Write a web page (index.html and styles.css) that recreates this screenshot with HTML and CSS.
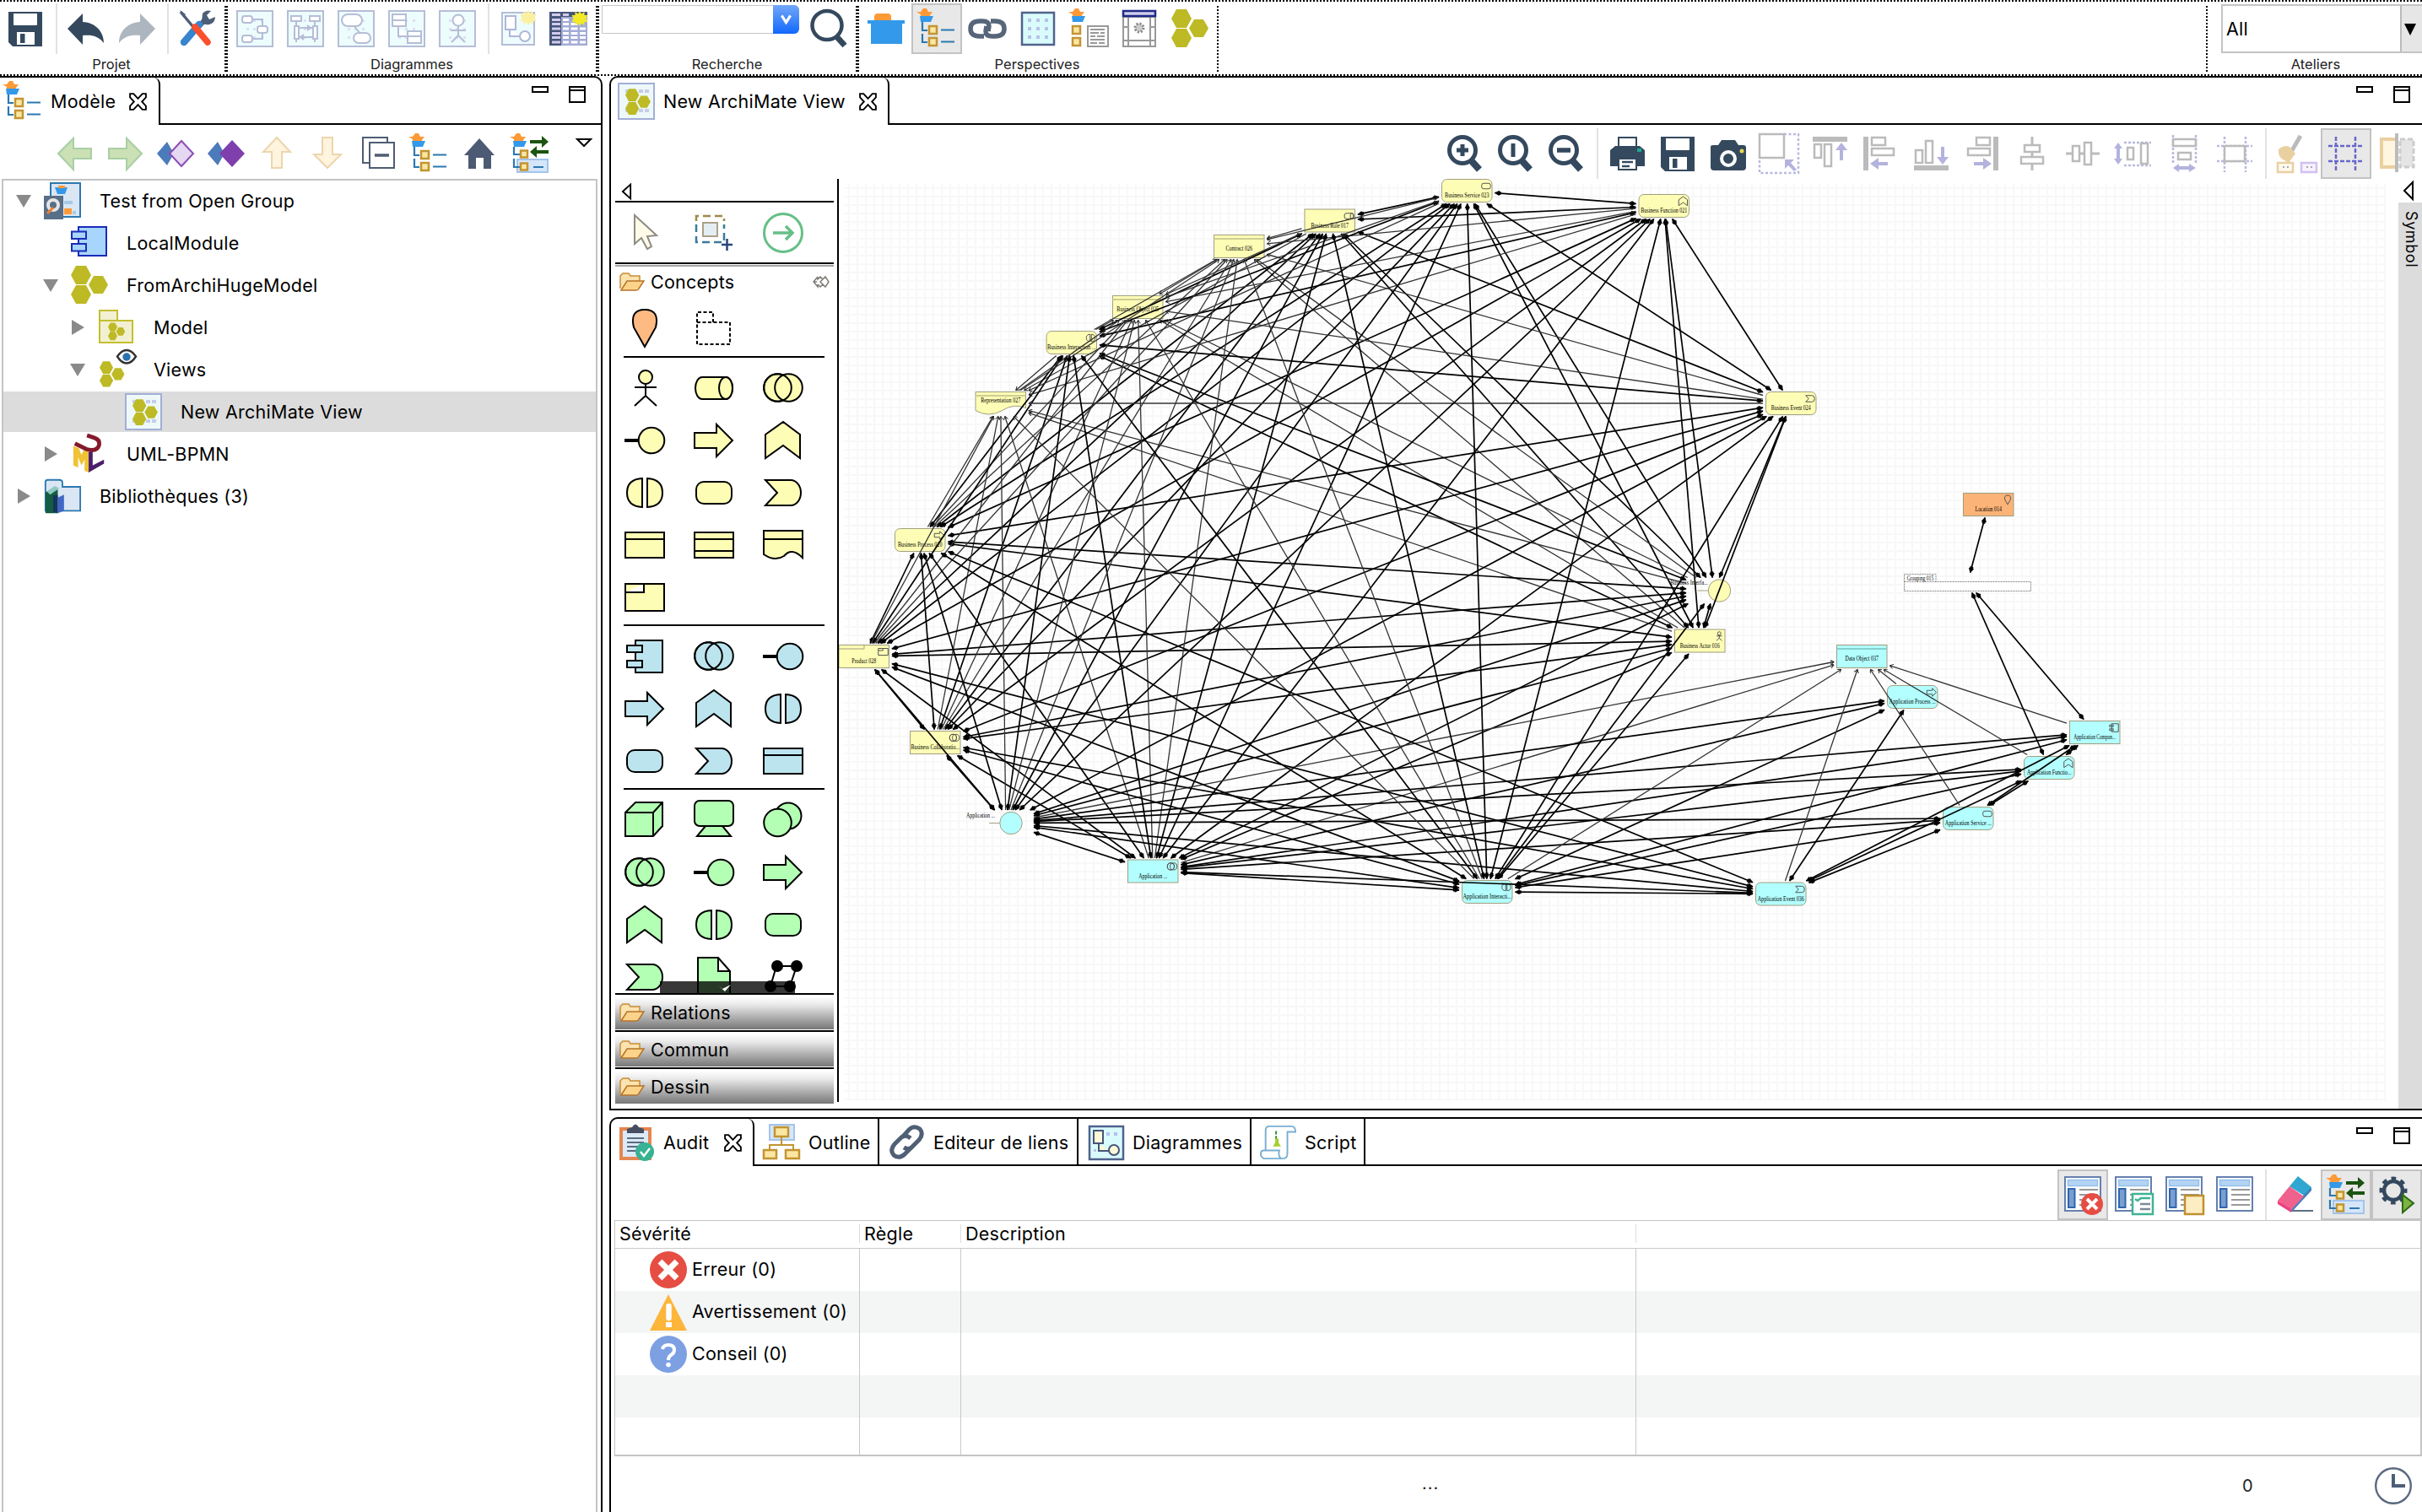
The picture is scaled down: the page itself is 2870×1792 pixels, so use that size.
FILE: index.html
```html
<!DOCTYPE html>
<html lang="fr">
<head>
<meta charset="utf-8">
<title>Modelio - Test from Open Group</title>
<link rel="stylesheet" href="styles.css">
</head>
<body>
<svg class="defs" width="0" height="0" aria-hidden="true">
<defs>
<!-- shared parts -->
<g id="cup"><path d="M-2 2H3L6-2H10L12 2H17L14 6V9H3V5Z" fill="#fd9a37"/><path d="M2 7H18L15 14H3Z" fill="#3399ea"/></g>
<g id="sq"><path d="M13 19h9v9h-9zM13 33h9v9h-9z" fill="#fbe6a2" stroke="#c29532" stroke-width="2.5"/></g>
<g id="hex"><path d="M0 10L6-1H18L24 10L18 21H6ZM0 33L6 22H18L24 33L18 44H6ZM21 21.500L27 11H38L44 21.500L38 32H27Z" fill="#bdba25"/></g>
<g id="sheet"><path d="M1 3h42v40H1z" fill="#fff" stroke="#6580b0" stroke-width="2"/><path d="M4.500 6.500h35v7h-35z" fill="#b5d4f4" stroke="#93c0ec" stroke-width="1.500"/><path d="M5 17h7.500v22H5z" fill="#7a9ed0" stroke="#2f66ad" stroke-width="2"/><path d="M18 18h22M18 24h22M18 30h22M18 36h22" stroke="#999" stroke-width="2"/></g>
<g id="frame"><path d="M1 1h42v42H1z" fill="#edfcfd" stroke="#b6bdd6" stroke-width="2"/><path d="M12 11h3v3h-3zM20 11h3v3h-3zM29 11h3v3h-3zM12 21h3v3h-3zM20 21h3v3h-3zM29 21h3v3h-3zM12 31h3v3h-3zM20 31h3v3h-3zM29 31h3v3h-3z" fill="#dcdff5"/></g>
<g id="sun"><path d="M0-9L2-5.500L5.500-8L5.500-4L9.500-4L7.500 0L9.500 4L5.500 4L5.500 8L2 5.500L0 9L-2 5.500L-5.500 8L-5.500 4L-9.500 4L-7.500 0L-9.500-4L-5.500-4L-5.500-8L-2-5.500Z"/></g>
<g id="lens"><circle cx="19" cy="18" r="15.500" fill="none" stroke="#34495e" stroke-width="5"/><path d="M29 30L39 41" stroke="#34495e" stroke-width="8"/></g>
</defs>
<symbol id="i-save" viewBox="0 0 44 44"><path d="M2 2H42V43H7L2 38Z" fill="#34495e"/><path d="M8 4H36V17Q36 18 35 18H9Q8 18 8 17ZM12 26H33V41H12Z" fill="#fff"/><path d="M16 28h5.500v11H16z" fill="#34495e"/></symbol>
<symbol id="i-undo" viewBox="0 0 44 44"><path d="M0 22L18 4V14C34 15 43 26 43 39C36 30 28 29 18 30V41Z" fill="#34495e"/></symbol>
<symbol id="i-redo" viewBox="0 0 44 44"><path d="M44 22L26 4V14C10 15 1 26 1 39C8 30 16 29 26 30V41Z" fill="#adb6bf"/></symbol>
<symbol id="i-tools" viewBox="0 0 44 44"><path d="M24 19L33 9" stroke="#4d5f78" stroke-width="6"/><path d="M28 4Q32 -1 38 1L33 6L36 11L43 8Q43 15 36 17Q30 18 27 14Z" fill="#4d5f78"/><path d="M2 2L17 20" stroke="#4d5f78" stroke-width="3.500"/><path d="M1 0L8 5L5 8Z" fill="#4d5f78"/><path d="M6 38L24 17" stroke="#3884cd" stroke-width="8.500" stroke-linecap="round"/><path d="M19 20L34 38" stroke="#fc4f2c" stroke-width="7.500" stroke-linecap="round"/></symbol>
<symbol id="i-d1" viewBox="0 0 44 44"><use href="#frame"/><g fill="#fff" stroke="#b6bdd6" stroke-width="2"><path d="M19 11H31V18M19 34H31V28" fill="none"/><rect x="7" y="7" width="12" height="8" rx="3"/><rect x="7" y="30" width="12" height="8" rx="3"/><rect x="25" y="19" width="12" height="8" rx="3"/></g></symbol>
<symbol id="i-d2" viewBox="0 0 44 44"><use href="#frame"/><g fill="#fff" stroke="#b6bdd6" stroke-width="2"><path d="M5 7h12v6H5zM27 7h12v6H27zM9 19h5v15H9zM31 19h5v15h-5zM11 13v6M33 13v6M14 21h17M14 32h17M11 34v4M33 34v4" /><path d="M24 18l4 3-4 3M20 29l-4 3 4 3" fill="#b6bdd6"/></g></symbol>
<symbol id="i-d3" viewBox="0 0 44 44"><use href="#frame"/><g fill="#fff" stroke="#b6bdd6" stroke-width="2"><path d="M19 18L27 28"/><rect x="5" y="5" width="24" height="14" rx="7"/><rect x="19" y="27" width="20" height="12" rx="6"/></g></symbol>
<symbol id="i-d4" viewBox="0 0 44 44"><use href="#frame"/><g fill="#fff" stroke="#b6bdd6" stroke-width="2"><path d="M5 5h16v14H5zM5 12h16M23 25h16v14H23zM23 31h16M12 19v12h11"/></g></symbol>
<symbol id="i-d5" viewBox="0 0 44 44"><use href="#frame"/><g fill="#fff" stroke="#b6bdd6" stroke-width="2"><circle cx="23" cy="12" r="6.500"/><path d="M23 19V30L15 38M23 30L31 38M14 24H32" fill="none"/></g></symbol>
<symbol id="i-dnew" viewBox="0 0 44 44"><path d="M3 3h38v38H3z" fill="#edfcfd" stroke="#b6bdd6" stroke-width="2"/><g fill="#fff" stroke="#b0b6d6" stroke-width="2"><path d="M7 7h12v16H7zM12 23v8h12"/><circle cx="30" cy="31" r="6"/></g><use href="#sun" x="34" y="9" fill="#fbf0a0"/></symbol>
<symbol id="i-table" viewBox="0 0 44 44"><path d="M-1 2H44V42H-1Z" fill="#a3abd6"/><path d="M-1 2h14V42H-1zM-1 2H44V8H-1z" fill="#47557a"/><path d="M2 4h10v3H2zM2 10h10v3H2zM2 15h10v3H2zM2 20.500h10v3H2zM2 26h10v3H2zM2 31h10v3H2zM2 36.500h10v3H2zM15 4h7v3h-7z" fill="#cfcdea"/><path d="M15 10h7v3h-7zM15 15h7v3h-7zM15 20.500h7v3h-7zM15 26h7v3h-7zM15 31h7v3h-7zM15 36.500h7v3h-7zM24.500 15h8v3h-8zM24.500 20.500h8v3h-8zM24.500 26h8v3h-8zM24.500 31h8v3h-8zM24.500 36.500h8v3h-8zM35 20.500h7v3h-7zM35 26h7v3h-7zM35 31h7v3h-7zM35 36.500h7v3h-7z" fill="#fff"/><use href="#sun" x="35" y="10" fill="#f4e928"/></symbol>
<symbol id="i-search" viewBox="0 0 44 44"><ellipse cx="20" cy="18" rx="17.500" ry="17" fill="none" stroke="#34495e" stroke-width="4.500"/><path d="M31 31L41 42" stroke="#34495e" stroke-width="7"/></symbol>
<symbol id="i-basket" viewBox="0 0 44 44"><path d="M8 13V8Q8 4 12 4H24Q28 4 28 8V13Z" fill="#fd9a37"/><path d="M0 12H44V16H41V40H4V16H0Z" fill="#3399ea"/></symbol>
<symbol id="i-tree" viewBox="0 0 44 44"><use href="#cup"/><path d="M5 14V24H11M5 28V38H11M27 23.500H43M27 37.500H43" fill="none" stroke="#2b78b0" stroke-width="2.200"/><use href="#sq"/></symbol>
<symbol id="i-link" viewBox="0 0 44 44"><path d="M18 31H13Q2 31 2 22Q2 13 13 13H16Q24 13 24 19L23 25M26 13H31Q42 13 42 22Q42 31 31 31H28Q20 31 20 25L21 19" fill="none" stroke="#56657a" stroke-width="5.500"/></symbol>
<symbol id="i-grid" viewBox="0 0 44 44"><path d="M3 3h38v38H3z" fill="#d9fbfc" stroke="#52628c" stroke-width="2.500"/><path d="M10 10h4v4h-4zM20 10h4v4h-4zM30 10h4v4h-4zM10 20h4v4h-4zM20 20h4v4h-4zM30 20h4v4h-4zM10 30h4v4h-4zM20 30h4v4h-4zM30 30h4v4h-4z" fill="#b9c0ea"/></symbol>
<symbol id="i-doc" viewBox="0 0 44 44"><use href="#cup"/><path d="M3 19h9v9H3zM3 33h9v9H3z" fill="#fbe6a2" stroke="#c29532" stroke-width="2.500"/><path d="M21 19h24v24H21z" fill="#fff" stroke="#999" stroke-width="2"/><path d="M24 23h17M24 27h10M36 27h5M24 31h6M32 31h9M24 35h17M24 39h8M34 39h7" stroke="#999" stroke-width="2"/></symbol>
<symbol id="i-scroll" viewBox="0 0 44 44"><path d="M3 8h38v35H3zM9 8V43M35 8V43M3 36H41M3 20H9M35 20H41" fill="#fff" stroke="#999" stroke-width="2"/><path d="M3 1h38v6H3z" fill="#d0cdec" stroke="#1f2a87" stroke-width="2.500"/><circle cx="22" cy="21" r="5" fill="#ccc" stroke="#888" stroke-width="3" stroke-dasharray="2 1.900"/></symbol>
<symbol id="i-hex" viewBox="0 0 44 44"><use href="#hex"/></symbol>
<symbol id="i-view" viewBox="0 0 44 44"><path d="M1 1h42v42H1z" fill="#eef8f8" stroke="#a3aed6" stroke-width="2"/><path d="M9 8h5v4H9zM25 8h5v4h-5zM32 8h5v4h-5zM9 31h5v4H9zM25 31h5v4h-5zM32 31h5v4h-5z" fill="#c5cdea"/><use href="#hex" transform="translate(9 8) scale(.68)"/></symbol>
<symbol id="i-back" viewBox="0 0 44 44"><path d="M3 22L21 4V16H42V28H21V41Z" fill="#cbe0b4" stroke="#a8cfa5" stroke-width="2"/></symbol>
<symbol id="i-fwd" viewBox="0 0 44 44"><path d="M42 22L24 4V16H3V28H24V41Z" fill="#cbe0b4" stroke="#a8cfa5" stroke-width="2"/></symbol>
<symbol id="i-dia1" viewBox="0 0 44 44"><path d="M0 22L12 8L20 22L12 36Z" fill="#4c7bbb"/><path d="M15 22L29 7L43 22L29 37Z" fill="#e5d8f2" stroke="#8d4eb4" stroke-width="2"/></symbol>
<symbol id="i-dia2" viewBox="0 0 44 44"><path d="M0 22L12 8L20 22L12 36Z" fill="#4c7bbb"/><path d="M14 22L29 6L44 22L29 38Z" fill="#7f3fac"/></symbol>
<symbol id="i-up" viewBox="0 0 44 44"><path d="M22 3L38 20H28V39H16V20H6Z" fill="#fff4dd" stroke="#ecd5af" stroke-width="2"/></symbol>
<symbol id="i-down" viewBox="0 0 44 44"><path d="M22 39L38 23H28V3H16V23H6Z" fill="#fff4dd" stroke="#ecd5af" stroke-width="2"/></symbol>
<symbol id="i-collapse" viewBox="0 0 44 44"><path d="M4 3H33V33H4Z" fill="#fff" stroke="#4e5d73" stroke-width="2"/><path d="M12 9H41V39H12Z" fill="#fff" stroke="#4e5d73" stroke-width="2"/><path d="M18 24H35" stroke="#4e5d73" stroke-width="3.500"/></symbol>
<symbol id="i-home" viewBox="0 0 44 44"><path d="M22 4L40 24H36V40H27V27H18V40H9V24H4Z" fill="#4d5a73"/></symbol>
<symbol id="i-sync" viewBox="0 0 44 44"><use href="#cup"/><path d="M7 29H43V44H7Z" fill="#d5e6fb" stroke="#a4c4ea" stroke-width="2"/><path d="M3 14V23H10M3 28V38H10M26 38H38" fill="none" stroke="#2b78b0" stroke-width="2.200"/><path d="M11 18.500h8v8h-8zM11 33.500h8v8h-8z" fill="#fbe6a2" stroke="#c29532" stroke-width="2.500"/><path d="M22 6H36V1L44 8L36 15V10H22ZM44 18H30V13L22 20L30 27V22H44Z" fill="#1c5410"/></symbol>
<symbol id="i-project" viewBox="0 0 44 44"><path d="M8 1H43V41H8Z" fill="#dbe6f4" stroke="#2b78b0" stroke-width="2"/><path d="M13 6H28L25 14H16Z" fill="#3399ea"/><path d="M17 4h8v3h-8zM24 31h9v7h-9z" fill="#fd9a37"/><path d="M24 24h10M34 36h4" stroke="#a7c9e6" stroke-width="4"/><path d="M0 16H23V44H0Z" fill="#596f87"/><circle cx="11" cy="27" r="6" fill="#596f87" stroke="#e5e5e5" stroke-width="4"/><path d="M4 37L11 30" stroke="#f07c33" stroke-width="3"/></symbol>
<symbol id="i-module" viewBox="0 0 44 44"><path d="M9 3H42V37H9Z" fill="#a7d5fb" stroke="#1b2cb8" stroke-width="2"/><path d="M1 8.500H18V17H1ZM1 23H18V31.500H1Z" fill="#a7d5fb" stroke="#1b2cb8" stroke-width="2"/></symbol>
<symbol id="i-hfolder" viewBox="0 0 44 44"><path d="M2 2H23V14H41V40H2ZM2 14H23" fill="#f2f0d2" stroke="#c4bf30" stroke-width="2"/><use href="#hex" transform="translate(12 17) scale(.46)"/></symbol>
<symbol id="i-views" viewBox="0 0 44 44"><use href="#hex" transform="translate(2 13) scale(.67)"/><path d="M23 6.500Q28-1 34-1Q40-1 45 6.500Q40 14.500 34 14.500Q28 14.500 23 6.500Z" fill="#fff" stroke="#333" stroke-width="2.400"/><circle cx="34" cy="7" r="4.700" fill="#2872ae"/></symbol>
<symbol id="i-uml" viewBox="0 0 44 46"><path d="M2 13L9 16L12 24L15 18L21 20V46L16 44V30L12 37L8 27V40L2 37Z" fill="#efc334"/><path d="M21 21L26 18V37L40 30V35L21 46Z" fill="#4a1f6b"/><path d="M4 10L18 17Q31 21 34 12Q35 5 28 3L19 0" fill="none" stroke="#85192c" stroke-width="5"/></symbol>
<symbol id="i-lib" viewBox="0 0 48 44"><path d="M2 41V4Q2 1 5 1H20Q24 1 24 5V10H47V41Z" fill="#dbe6f4" stroke="#2b78b0" stroke-width="2"/><path d="M2 17L14 10L18 14V44H2Z" fill="#155c44"/><path d="M4 16L14 9L20 12L8 20Z" fill="#8fcac0"/><path d="M12 21H18V44L12 42Z" fill="#16345e"/><path d="M18 24L26 20V41L18 44Z" fill="#4268c5"/></symbol>
<symbol id="i-plus" viewBox="0 0 44 44"><use href="#lens"/><path d="M19 11V25M12 18H26" stroke="#34495e" stroke-width="5"/></symbol>
<symbol id="i-one" viewBox="0 0 44 44"><use href="#lens"/><path d="M19 10V26" stroke="#34495e" stroke-width="5"/></symbol>
<symbol id="i-minus" viewBox="0 0 44 44"><use href="#lens"/><path d="M11 18H27" stroke="#34495e" stroke-width="5.500"/></symbol>
<symbol id="i-print" viewBox="0 0 44 44"><path d="M12 3H33V16H12Z" fill="#fff" stroke="#34495e" stroke-width="2"/><path d="M8 13H37L43 18V37H2V18Z" fill="#34495e"/><path d="M12 28H33V41H12Z" fill="#fff" stroke="#34495e" stroke-width="2"/><path d="M16 32H29M16 37H25" stroke="#34495e" stroke-width="2.500"/><path d="M34 16h5v4h-5z" fill="#20a890"/></symbol>
<symbol id="i-camera" viewBox="0 0 44 44"><path d="M1 14Q1 12 4 12H10L14 6H30L34 12H40Q43 12 43 15V38Q43 42 39 42H5Q1 42 1 38Z" fill="#34495e"/><circle cx="22" cy="28" r="8" fill="none" stroke="#fff" stroke-width="4"/><circle cx="38" cy="19" r="2.500" fill="#e8d84e"/></symbol>
<symbol id="i-resize" viewBox="0 0 44 44"><path d="M-1 -1H28V27H-1Z" fill="#fff" stroke="#bbb" stroke-width="2.500"/><path d="M28-1H45V45H-1V27" fill="none" stroke="#b9b9e0" stroke-width="2.500" stroke-dasharray="3 2.500"/><path d="M29 29H40L36 33L43 41L40 43L33 36L29 40Z" fill="#b3b3de"/></symbol>
<symbol id="i-atop" viewBox="0 0 44 44"><path d="M2 2H43V8H2Z" fill="#bbb"/><path d="M4 11H12V27H4ZM16 11H24V37H16Z" fill="none" stroke="#bbb" stroke-width="2.500"/><path d="M36 9L43 18H38V30H34V18H29Z" fill="#b3b3de"/></symbol>
<symbol id="i-abot" viewBox="0 0 44 44"><path d="M2 36H43V42H2Z" fill="#bbb"/><path d="M4 18H12V33H4ZM16 7H24V33H16Z" fill="none" stroke="#bbb" stroke-width="2.500"/><path d="M36 35L43 26H38V14H34V26H29Z" fill="#b3b3de"/></symbol>
<symbol id="i-aleft" viewBox="0 0 44 44"><path d="M2 2H8V42H2Z" fill="#bbb"/><path d="M12 3H28V12H12ZM12 16H38V24H12Z" fill="none" stroke="#bbb" stroke-width="2.500"/><path d="M10 34L20 27V32H31V36H20V41Z" fill="#b3b3de"/></symbol>
<symbol id="i-aright" viewBox="0 0 44 44"><path d="M36 2H42V42H36Z" fill="#bbb"/><path d="M16 3H32V12H16ZM6 16H32V24H6Z" fill="none" stroke="#bbb" stroke-width="2.500"/><path d="M34 34L24 27V32H13V36H24V41Z" fill="#b3b3de"/></symbol>
<symbol id="i-cv" viewBox="0 0 44 44"><path d="M22 2V42" stroke="#bbb" stroke-width="3"/><path d="M13 12H31V20H13ZM9 26H35V34H9Z" fill="#fff" stroke="#bbb" stroke-width="2.500"/></symbol>
<symbol id="i-ch" viewBox="0 0 44 44"><path d="M2 22H42" stroke="#bbb" stroke-width="3"/><path d="M10 13H18V31H10ZM24 9H32V35H24Z" fill="#fff" stroke="#bbb" stroke-width="2.500"/></symbol>
<symbol id="i-sh" viewBox="0 0 44 44"><path d="M11 9H43M11 36H43" stroke="#b9b9e0" stroke-width="2.500" stroke-dasharray="3 2"/><path d="M4 9L9 16H6V28H9L4 35L-1 28H2V16H-1Z" fill="#b3b3de"/><path d="M15 15H22V29H15ZM31 10H39V34H31Z" fill="none" stroke="#bbb" stroke-width="2.500"/></symbol>
<symbol id="i-sw" viewBox="0 0 44 44"><path d="M9 0V34M36 0V34" stroke="#b9b9e0" stroke-width="2.500" stroke-dasharray="3 2"/><path d="M9 39L16 34V37H28V34L36 39L28 44V41H16V44Z" fill="#b3b3de"/><path d="M9 5H36V13H9ZM15 21H30V29H15Z" fill="none" stroke="#bbb" stroke-width="2.500"/></symbol>
<symbol id="i-snap" viewBox="0 0 44 44"><path d="M1 13H43M1 31H43M10 2V44M35 2V44" stroke="#b9b9e0" stroke-width="2.500" stroke-dasharray="3 2"/><path d="M10 13H34V31H10Z" fill="#fff" stroke="#bbb" stroke-width="2.500"/></symbol>
<symbol id="i-brush" viewBox="0 0 44 44"><path d="M28 1L17 20" stroke="#bbb" stroke-width="5"/><path d="M2 17Q9 11 15 14L22 22L14 33L9 30Q1 27 2 17Z" fill="#ead0a0"/><path d="M1 33H19V44H1Z" fill="#fffaf0" stroke="#ead0a0" stroke-width="2.500"/><path d="M29 33H47V44H29Z" fill="#f7f2ff" stroke="#cfc1ee" stroke-width="2.500"/><path d="M7 38h2M12 38h2M35 38h2M40 38h2" stroke="#aaa" stroke-width="2"/></symbol>
<symbol id="i-guides" viewBox="0 0 44 44"><path d="M1 13H43M1 31H43M10 2V44M33 2V44" stroke="#6767cc" stroke-width="2.500" stroke-dasharray="5 2"/></symbol>
<symbol id="i-cut" viewBox="0 0 44 44"><path d="M4 5H22V38H4Z" fill="#fff6e0" stroke="#ead0a0" stroke-width="4"/><path d="M22 -2V44" stroke="#bbb" stroke-width="4"/><path d="M26 5H42V38H26Z" fill="#e5e5e5" stroke="#ccc" stroke-width="3" stroke-dasharray="6 3"/></symbol>
<symbol id="i-shE" viewBox="0 0 44 44"><use href="#sheet" y="-2"/><circle cx="33" cy="33" r="13" fill="#e64d43"/><path d="M27 27L39 39M39 27L27 39" stroke="#fff" stroke-width="4"/></symbol>
<symbol id="i-shC" viewBox="0 0 44 44"><use href="#sheet" y="-2"/><path d="M21 21H45V45H21Z" fill="#fff" stroke="#3fb395" stroke-width="2.500"/><path d="M24 27l3 2 4-3h11" fill="none" stroke="#3fb395" stroke-width="2.500"/><path d="M30 33H42M30 39H42" stroke="#7f8a99" stroke-width="2.500"/></symbol>
<symbol id="i-shN" viewBox="0 0 44 44"><use href="#sheet" y="-2"/><path d="M23 23H45V45H23Z" fill="#fdedc3" stroke="#bf9030" stroke-width="2.500"/></symbol>
<symbol id="i-sh0" viewBox="0 0 44 44"><use href="#sheet" y="-2"/></symbol>
<symbol id="i-eraser" viewBox="0 0 44 44"><path d="M17 41H43" stroke="#5f6f80" stroke-width="2"/><path d="M25 0L41 13L34 24L15 12Z" fill="#30a7d0"/><path d="M41 13V17L18 42L17 37Z" fill="#3f7fc0"/><path d="M15 12L32 24L17 40L1 29Z" fill="#f0628e"/><path d="M1 29V33L17 43V39Z" fill="#ee3f7f"/></symbol>
<symbol id="i-gear" viewBox="0 0 44 44"><circle cx="18" cy="17" r="11" fill="none" stroke="#34495e" stroke-width="4.500"/><circle cx="18" cy="17" r="14" fill="none" stroke="#34495e" stroke-width="5" stroke-dasharray="5.500 5.490" stroke-dashoffset="2.750"/><path d="M29 22L42 32L29 43Z" fill="#7cb342" stroke="#2c6b12" stroke-width="2"/></symbol>
<symbol id="i-audit" viewBox="0 0 42 44"><path d="M2 6H36V41H2Z" fill="#dce9f7" stroke="#e58650" stroke-width="4"/><path d="M9 11V6L15 4Q19-3 23 4L29 6V11Z" fill="#454f63"/><path d="M9 17H29M9 22H29M9 27H24M9 32H20" stroke="#5a6c80" stroke-width="2"/><circle cx="30" cy="33" r="11" fill="#37b292"/><path d="M25 33L29 38L36 29" fill="none" stroke="#fff" stroke-width="2.500"/></symbol>
<symbol id="i-outline" viewBox="0 0 44 44"><path d="M8 1H37V19H8Z" fill="#d5e6fb" stroke="#a4c4ea" stroke-width="2"/><path d="M22 15V24M8 31V25H36V31" fill="none" stroke="#c29532" stroke-width="2"/><path d="M14 4H30V15H14ZM1 31H16V41H1ZM27 31H43V41H27Z" fill="#fbe6a2" stroke="#c29532" stroke-width="2.500"/></symbol>
<symbol id="i-chain" viewBox="0 0 44 44"><g fill="none" stroke="#4f5f75" stroke-width="5"><path d="M16 16L24 7Q30 1 37 6Q42 12 36 19L27 28Q23 31 18 28"/><path d="M27 28L19 36Q12 42 6 37Q1 31 7 24L15 16Q20 12 26 17"/></g></symbol>
<symbol id="i-diag" viewBox="0 0 44 44"><path d="M2 3H42V42H2Z" fill="#d9fbfc" stroke="#52628c" stroke-width="2.500"/><path d="M22 10h4v4h-4zM31 10h4v4h-4zM7 30h3v3H7z" fill="#b9c0ea"/><path d="M7 8H18V23H7ZM13 23V32H25" fill="#fdf8d8" stroke="#47557a" stroke-width="2"/><circle cx="31" cy="31" r="6" fill="#fdf8d8" stroke="#47557a" stroke-width="2"/></symbol>
<symbol id="i-script" viewBox="0 0 46 44"><path d="M7 32V7Q7 2 12 2H39Q44 2 44 9H34V36Q34 42 28 42H5Q1 40 1 36Q1 32 5 32H24Q22 38 26 42" fill="#fff" stroke="#79aed3" stroke-width="2"/><path d="M20 8V18" stroke="#2f8a2f" stroke-width="2" stroke-dasharray="4 2"/><path d="M19 17H23V22L26 27H16L19 22Z" fill="#a3cf2f"/></symbol>
<symbol id="i-err" viewBox="0 0 44 44"><circle cx="22" cy="22" r="22" fill="#e64d43"/><path d="M12 12L32 32M32 12L12 32" stroke="#fff" stroke-width="7"/></symbol>
<symbol id="i-warn" viewBox="0 0 44 44"><path d="M22 1L44 44H0Z" fill="#fdb63a"/><path d="M22.500 15V29" stroke="#fff" stroke-width="6.500" stroke-linecap="round"/><path d="M19 34h7v6h-7z" fill="#fff"/></symbol>
<symbol id="i-info" viewBox="0 0 44 44"><circle cx="22" cy="22" r="22" fill="#7da0e3"/><path d="M15 16Q16 11 22 11Q29 11 29 17Q29 21 25 23Q22 25 22 29" fill="none" stroke="#fff" stroke-width="4"/><circle cx="22" cy="34.500" r="2.800" fill="#fff"/></symbol>
<symbol id="i-clock" viewBox="0 0 44 44"><circle cx="22" cy="22" r="20.800" fill="#fff" stroke="#5b6980" stroke-width="2.400"/><path d="M22 8V22H36" fill="none" stroke="#4d5f78" stroke-width="4"/></symbol>
<symbol id="i-x" viewBox="0 0 22 22"><path d="M2 2H6L11 7.500L16 2H20V6L15.500 11L20 16V20H16L11 14.500L6 20H2V16L6.500 11L2 6Z" fill="#fff" stroke="#000" stroke-width="1.800"/></symbol>
<symbol id="i-min" viewBox="0 0 20 20"><path d="M1 1H19V7H1Z" fill="#fff" stroke="#000" stroke-width="2"/></symbol>
<symbol id="i-max" viewBox="0 0 20 20"><path d="M1 1H19V19H1ZM1 5H19" fill="#fff" stroke="#000" stroke-width="2"/></symbol>
<symbol id="i-fold" viewBox="0 0 30 22"><path d="M1 19V4L4 1H11L13 4H24V10" fill="#fbe3b0" stroke="#c98c35" stroke-width="1.500"/><path d="M2 21L9 10H29L23 19Q22 21 20 21Z" fill="#fbd48a" stroke="#b5732a" stroke-width="1.500"/></symbol>
<symbol id="i-pin" viewBox="0 0 20 14"><path d="M6 1L1 7L6 13V10M6 1V4L9 1L12 4L9 7L12 10L9 13L6 10M1 7H5M12 4L15 1L19 7L15 13L12 10" fill="none" stroke="#807c76" stroke-width="1.500"/></symbol>
<symbol id="i-cursor" viewBox="0 0 48 48"><path d="M12 3V37L20 30L27 43L32 40L27 28L38 27Z" fill="#fffbe8" stroke="#8f8b85" stroke-width="2"/></symbol>
<symbol id="i-marq" viewBox="0 0 48 48"><path d="M3 10V4H36V10" fill="none" stroke="#a08948" stroke-width="2.500" stroke-dasharray="9 5"/><path d="M3 14V35H36V14" fill="none" stroke="#3a7b9d" stroke-width="2.500" stroke-dasharray="9 5"/><path d="M11 12H28V28H11Z" fill="#e3eef2" stroke="#aaa188" stroke-width="2"/><path d="M33 38H46M39.500 31V45" stroke="#27457d" stroke-width="2.500"/></symbol>
<symbol id="i-go" viewBox="0 0 48 48"><circle cx="24" cy="24" r="22.500" fill="#fff" stroke="#66bf87" stroke-width="3"/><path d="M12 24H35M27 16L35 24L27 32" fill="none" stroke="#66bf87" stroke-width="3.500"/></symbol>
<!-- ArchiMate shapes; fill and stroke come from the place of use -->
<symbol id="a-location" viewBox="0 0 48 48"><path d="M24 46L11 23Q6 2 24 2Q42 2 37 23Z"/></symbol>
<symbol id="a-group" viewBox="0 0 48 48"><path d="M4 17V5H23V17M4 17H43V43H4Z" stroke-dasharray="4 2.500"/></symbol>
<symbol id="a-actor" viewBox="0 0 48 48"><circle cx="25" cy="11" r="8"/><path d="M12 23H38M25 19V33M12 45L25 33L38 45" fill="none"/></symbol>
<symbol id="a-role" viewBox="0 0 48 48"><path d="M10 11H38A8 13 0 0 1 38 37H10A8 13 0 0 1 10 11Z"/><ellipse cx="38" cy="24" rx="8" ry="13"/></symbol>
<symbol id="a-collab" viewBox="0 0 48 48"><circle cx="17.500" cy="23.500" r="16.300"/><circle cx="30.500" cy="23.500" r="16.300"/><circle cx="17.500" cy="23.500" r="16.300" fill="none"/></symbol>
<symbol id="a-interface" viewBox="0 0 48 48"><path d="M0 24H17" stroke-width="4"/><circle cx="32" cy="24" r="15.300"/></symbol>
<symbol id="a-process" viewBox="0 0 48 48"><path d="M1 15H27V5L46 24L27 43V33H1Z"/></symbol>
<symbol id="a-function" viewBox="0 0 48 48"><path d="M3 17L24 2L44 17V45L24 30L3 45Z"/></symbol>
<symbol id="a-inter" viewBox="0 0 48 48"><path d="M21 7V41Q3 40 3 24Q3 8 21 7ZM27 7V41Q45 40 45 24Q45 8 27 7Z"/></symbol>
<symbol id="a-service" viewBox="0 0 48 48"><rect x="3" y="11" width="42" height="26" rx="9"/></symbol>
<symbol id="a-event" viewBox="0 0 48 48"><path d="M3 9H33A12 15 0 0 1 33 39H3L17 24Z"/></symbol>
<symbol id="a-object" viewBox="0 0 48 48"><path d="M1 9H47V39H1ZM1 17H47"/></symbol>
<symbol id="a-contract" viewBox="0 0 48 48"><path d="M1 9H47V39H1ZM1 17H47M1 31H47"/></symbol>
<symbol id="a-repr" viewBox="0 0 48 48"><path d="M1 7H47V39Q34 26 25 37Q14 44 1 35ZM1 17H47"/></symbol>
<symbol id="a-product" viewBox="0 0 48 48"><path d="M1 8H47V40H1ZM1 18H23V8"/></symbol>
<symbol id="a-component" viewBox="0 0 48 48"><path d="M13 5H45V43H13Z"/><path d="M3 11H21V19H3ZM3 29H21V37H3Z"/></symbol>
<symbol id="a-node" viewBox="0 0 48 48"><path d="M1 16L13 4H45V32L34 44H1ZM1 16H34V44M34 16L45 4"/></symbol>
<symbol id="a-device" viewBox="0 0 48 48"><path d="M14 32L4 44H44L34 32"/><rect x="1" y="2" width="46" height="30" rx="6"/></symbol>
<symbol id="a-syssoft" viewBox="0 0 48 48"><circle cx="30" cy="20" r="15.500"/><circle cx="17.500" cy="28" r="16.300"/></symbol>
<symbol id="a-artifact" viewBox="0 0 48 48"><path d="M5 1H29L43 17V47H5ZM29 1V17H43"/></symbol>
<symbol id="a-network" viewBox="0 0 48 48"><path d="M16 11H40L32 35H9Z" fill="none"/><g fill="#000"><circle cx="17" cy="11" r="6"/><circle cx="40" cy="11" r="6"/><circle cx="9" cy="35" r="6"/><circle cx="32" cy="35" r="6"/></g></symbol>
</svg>

<div class="window">
<header class="mainbar">
  <section class="bargroup g-projet">
    <div class="tiles"><span class="tile"><svg><use href="#i-save"/></svg></span><i class="sep"></i><span class="tile"><svg><use href="#i-undo"/></svg></span><span class="tile"><svg><use href="#i-redo"/></svg></span><i class="sep"></i><span class="tile"><svg><use href="#i-tools"/></svg></span></div>
    <div class="caption">Projet</div>
  </section>
  <section class="bargroup g-diag">
    <div class="tiles"><span class="tile"><svg><use href="#i-d1"/></svg></span><span class="tile"><svg><use href="#i-d2"/></svg></span><span class="tile"><svg><use href="#i-d3"/></svg></span><span class="tile"><svg><use href="#i-d4"/></svg></span><span class="tile"><svg><use href="#i-d5"/></svg></span><i class="sep"></i><span class="tile"><svg><use href="#i-dnew"/></svg></span><span class="tile"><svg><use href="#i-table"/></svg></span></div>
    <div class="caption">Diagrammes</div>
  </section>
  <section class="bargroup g-search">
    <div class="tiles"><span class="combo"><b><svg viewBox="0 0 30 32"><path d="M10 12L15 20L20 12" fill="none" stroke="#fff" stroke-width="3"/></svg></b></span><span class="tile"><svg><use href="#i-search"/></svg></span></div>
    <div class="caption">Recherche</div>
  </section>
  <section class="bargroup g-persp">
    <div class="tiles"><span class="tile"><svg><use href="#i-basket"/></svg></span><span class="tile on"><svg><use href="#i-tree"/></svg></span><span class="tile"><svg><use href="#i-link"/></svg></span><span class="tile"><svg><use href="#i-grid"/></svg></span><span class="tile"><svg><use href="#i-doc"/></svg></span><span class="tile"><svg><use href="#i-scroll"/></svg></span><span class="tile"><svg><use href="#i-hex"/></svg></span></div>
    <div class="caption">Perspectives</div>
  </section>
  <section class="bargroup g-atel">
    <div class="choice"><span>All</span><b><svg viewBox="0 0 24 56"><path d="M3 21H17L10 35Z"/></svg></b></div>
    <div class="caption">Ateliers</div>
  </section>
</header>

<div class="workbench">
<aside class="part model">
  <div class="tabs"><div class="tab active t-model"><svg class="ic"><use href="#i-tree"/></svg><span>Modèle</span><svg class="x"><use href="#i-x"/></svg></div><div class="rest"><svg class="mm"><use href="#i-min"/></svg><svg class="mm"><use href="#i-max"/></svg></div></div>
  <div class="toolbar left"><span class="tile"><svg><use href="#i-back"/></svg></span><span class="tile"><svg><use href="#i-fwd"/></svg></span><span class="tile"><svg><use href="#i-dia1"/></svg></span><span class="tile"><svg><use href="#i-dia2"/></svg></span><span class="tile"><svg><use href="#i-up"/></svg></span><span class="tile"><svg><use href="#i-down"/></svg></span><span class="tile"><svg><use href="#i-collapse"/></svg></span><span class="tile"><svg><use href="#i-tree"/></svg></span><span class="tile"><svg><use href="#i-home"/></svg></span><span class="tile"><svg><use href="#i-sync"/></svg></span><svg class="menu" viewBox="0 0 20 11"><path d="M2 1H18L10 9Z" fill="#fff" stroke="#000" stroke-width="2"/></svg></div>
  <ul class="tree">
    <li class="l0 open"><svg><use href="#i-project"/></svg>Test from Open Group</li>
    <li class="l1"><svg><use href="#i-module"/></svg>LocalModule</li>
    <li class="l1 open"><svg><use href="#i-hex"/></svg>FromArchiHugeModel</li>
    <li class="l2 shut"><svg><use href="#i-hfolder"/></svg>Model</li>
    <li class="l2 open"><svg><use href="#i-views"/></svg>Views</li>
    <li class="l3 selected"><svg><use href="#i-view"/></svg>New ArchiMate View</li>
    <li class="l1 shut"><svg><use href="#i-uml"/></svg>UML-BPMN</li>
    <li class="l0 shut"><svg><use href="#i-lib"/></svg>Bibliothèques (3)</li>
  </ul>
</aside>

<main class="right">
<section class="part editor">
  <div class="tabs"><div class="tab active t-view"><svg class="ic"><use href="#i-view"/></svg><span>New ArchiMate View</span><svg class="x"><use href="#i-x"/></svg></div><div class="rest"><svg class="mm"><use href="#i-min"/></svg><svg class="mm"><use href="#i-max"/></svg></div></div>
  <div class="toolbar edit"><span class="tile"><svg><use href="#i-plus"/></svg></span><span class="tile"><svg><use href="#i-one"/></svg></span><span class="tile"><svg><use href="#i-minus"/></svg></span><i class="sep"></i><span class="tile"><svg><use href="#i-print"/></svg></span><span class="tile"><svg><use href="#i-save"/></svg></span><span class="tile"><svg><use href="#i-camera"/></svg></span><span class="tile"><svg><use href="#i-resize"/></svg></span><span class="tile"><svg><use href="#i-atop"/></svg></span><span class="tile"><svg><use href="#i-aleft"/></svg></span><span class="tile"><svg><use href="#i-abot"/></svg></span><span class="tile"><svg><use href="#i-aright"/></svg></span><span class="tile"><svg><use href="#i-cv"/></svg></span><span class="tile"><svg><use href="#i-ch"/></svg></span><span class="tile"><svg><use href="#i-sh"/></svg></span><span class="tile"><svg><use href="#i-sw"/></svg></span><span class="tile"><svg><use href="#i-snap"/></svg></span><i class="sep"></i><span class="tile"><svg><use href="#i-brush"/></svg></span><span class="tile on"><svg><use href="#i-guides"/></svg></span><span class="tile"><svg><use href="#i-cut"/></svg></span></div>
  <div class="stage">
    <div class="palette">
      <div class="fold"><svg viewBox="0 0 14 22"><path d="M12 2V20L2 11Z" fill="#fff" stroke="#000" stroke-width="2"/></svg></div>
      <div class="picks"><svg><use href="#i-cursor"/></svg><svg><use href="#i-marq"/></svg><svg><use href="#i-go"/></svg></div>
      <div class="drawer first"><svg class="f"><use href="#i-fold"/></svg><span>Concepts</span><svg class="p"><use href="#i-pin"/></svg></div>
      <div class="concepts">
        <div class="shapes other"><svg class="loc"><use href="#a-location"/></svg><svg class="grp"><use href="#a-group"/></svg></div>
        <div class="shapes business"><svg><use href="#a-actor"/></svg><svg><use href="#a-role"/></svg><svg><use href="#a-collab"/></svg><svg><use href="#a-interface"/></svg><svg><use href="#a-process"/></svg><svg><use href="#a-function"/></svg><svg><use href="#a-inter"/></svg><svg><use href="#a-service"/></svg><svg><use href="#a-event"/></svg><svg><use href="#a-object"/></svg><svg><use href="#a-contract"/></svg><svg><use href="#a-repr"/></svg><svg><use href="#a-product"/></svg></div>
        <div class="shapes application"><svg><use href="#a-component"/></svg><svg><use href="#a-collab"/></svg><svg><use href="#a-interface"/></svg><svg><use href="#a-process"/></svg><svg><use href="#a-function"/></svg><svg><use href="#a-inter"/></svg><svg><use href="#a-service"/></svg><svg><use href="#a-event"/></svg><svg><use href="#a-object"/></svg></div>
        <div class="shapes technology"><svg><use href="#a-node"/></svg><svg><use href="#a-device"/></svg><svg><use href="#a-syssoft"/></svg><svg><use href="#a-collab"/></svg><svg><use href="#a-interface"/></svg><svg><use href="#a-process"/></svg><svg><use href="#a-function"/></svg><svg><use href="#a-inter"/></svg><svg><use href="#a-service"/></svg><svg><use href="#a-event"/></svg><svg><use href="#a-artifact"/></svg><svg><use href="#a-network"/></svg></div>
        <div class="scroller"><svg viewBox="0 0 16 10"><path d="M0 2L5 6L15 1L8 9Z" fill="#fff"/></svg></div>
      </div>
      <div class="drawer"><svg class="f"><use href="#i-fold"/></svg><span>Relations</span></div>
      <div class="drawer"><svg class="f"><use href="#i-fold"/></svg><span>Commun</span></div>
      <div class="drawer"><svg class="f"><use href="#i-fold"/></svg><span>Dessin</span></div>
    </div>
    <svg class="canvas" id="canvas" viewBox="994 212 1848 1101" width="1848" height="1101">
      <defs>
        <pattern id="dots" x="1005" y="222" width="10" height="10" patternUnits="userSpaceOnUse"><path d="M0 1H10M1 0V10" stroke="#f8f8f8" stroke-width="2"/></pattern>
        <marker id="solid" viewBox="0 0 12 10" refX="11" refY="5" markerWidth="8.500" markerHeight="6.500" markerUnits="userSpaceOnUse" orient="auto-start-reverse"><path d="M12 5L3 0V2H0V8H3V10Z"/></marker>
        <marker id="open" viewBox="0 0 10 10" refX="9" refY="5" markerWidth="5.500" markerHeight="5.500" markerUnits="userSpaceOnUse" orient="auto-start-reverse"><path d="M2 0L9 5L2 10" fill="none" stroke="#222" stroke-width="1.700"/></marker>
      </defs>
      <rect x="1000" y="218" width="1828" height="1087" fill="url(#dots)"/>
      <g id="nodes"></g>
      <g id="edges"></g>
    </svg>
    <div class="symbolbar"><svg viewBox="0 0 14 24"><path d="M12 2V22L2 12Z" fill="#fff" stroke="#000" stroke-width="2"/></svg><div><span>Symbol</span></div></div>
  </div>
</section>

<section class="part audit">
  <div class="tabs"><div class="tab active t-audit"><svg class="ic"><use href="#i-audit"/></svg><span>Audit</span><svg class="x"><use href="#i-x"/></svg></div><div class="tab t-outline"><svg class="ic"><use href="#i-outline"/></svg><span>Outline</span></div><div class="tab t-links"><svg class="ic"><use href="#i-chain"/></svg><span>Editeur de liens</span></div><div class="tab t-diags"><svg class="ic"><use href="#i-diag"/></svg><span>Diagrammes</span></div><div class="tab t-script"><svg class="ic"><use href="#i-script"/></svg><span>Script</span></div><div class="rest"><svg class="mm"><use href="#i-min"/></svg><svg class="mm"><use href="#i-max"/></svg></div></div>
  <div class="toolbar low"><span class="tile on"><svg><use href="#i-shE"/></svg></span><span class="tile"><svg><use href="#i-shC"/></svg></span><span class="tile"><svg><use href="#i-shN"/></svg></span><span class="tile"><svg><use href="#i-sh0"/></svg></span><i class="sep"></i><span class="tile"><svg><use href="#i-eraser"/></svg></span><span class="tile on"><svg><use href="#i-sync"/></svg></span><span class="tile on"><svg><use href="#i-gear"/></svg></span></div>
  <div class="table">
    <div class="row head"><div>Sévérité</div><div>Règle</div><div>Description</div><div></div></div>
    <div class="row"><div><svg><use href="#i-err"/></svg><span>Erreur (0)</span></div><div></div><div></div><div></div></div>
    <div class="row alt"><div><svg><use href="#i-warn"/></svg><span>Avertissement (0)</span></div><div></div><div></div><div></div></div>
    <div class="row"><div><svg><use href="#i-info"/></svg><span>Conseil (0)</span></div><div></div><div></div><div></div></div>
    <div class="row alt"><div></div><div></div><div></div><div></div></div>
    <div class="row last"><div></div><div></div><div></div><div></div></div>
  </div>
  <footer class="status"><span class="dots">...</span><span class="count">0</span><svg><use href="#i-clock"/></svg></footer>
</section>
</main>
</div>
</div>
<script src="script.js"></script>
</body>
</html>
```
FILE: styles.css
```css
* { box-sizing: border-box; }
html, body { margin: 0; background: #fff; }
body { font-family: Inter, "Liberation Sans", sans-serif; font-size: 21.5px; letter-spacing: .25px; color: #000; overflow: hidden; }
svg { display: block; flex: none; overflow: visible; }
symbol { overflow: visible; }
.defs { position: absolute; }
.window { width: 2870px; height: 1792px; display: flex; flex-direction: column; overflow: hidden; }

.tile { width: 60px; height: 60px; flex: none; display: flex; align-items: center; justify-content: center; }
.tile svg { width: 44px; height: 44px; }
.tile.on { background: #e8e8e8; border: 2px solid #c3c3c3; }
.sep { width: 12px; height: 60px; flex: none; border-left: 2px solid #e2e2e2; margin-left: 6px; margin-right: -6px; }

/* main toolbar */
.mainbar { height: 90px; flex: none; display: flex; padding-top: 4px;
  background:
    repeating-linear-gradient(90deg, #000 0 2px, transparent 2px 4px) 0 0 / 100% 2px no-repeat,
    repeating-linear-gradient(90deg, #000 0 2px, transparent 2px 4px) 0 88px / 100% 2px no-repeat; }
.bargroup { height: 84px; flex: none; background: repeating-linear-gradient(180deg, #000 0 2px, transparent 2px 4px) 100% 3px / 4px 78px no-repeat; }
.tiles { display: flex; height: 60px; }
.caption { height: 24px; text-align: center; font-size: 16.5px; line-height: 24px; letter-spacing: 0; color: #222; padding-right: 6px; }
.g-projet { width: 270px; }
.g-diag { width: 440px; padding-left: 2px; }
.g-search { width: 308px; padding-left: 3px; }
.g-persp { width: 426px; padding-left: 2px; background-size: 2px 78px; }
.g-atel { width: 256px; margin-left: 1170px; padding-left: 18px; background-position: 0 3px; background-size: 2px 78px; }
.g-search .tile { margin-left: 5px; }
.g-search .caption { padding-right: 8px; }
.g-atel .caption { padding: 0 14px 0 0; }
.combo { width: 234px; height: 34px; margin-top: 2px; border: 1.500px solid #c6c6c6; border-radius: 0 6px 6px 0; display: flex; justify-content: flex-end; }
.combo b { width: 31px; height: 34px; margin: -1px; border-radius: 0 6px 6px 0; background: linear-gradient(#73a7f8, #1068fd); }
.choice { height: 58px; border: 2px solid #c4c4c4; margin: 1px -2px 1px 0; display: flex; justify-content: space-between; align-items: center; padding-left: 4px; }
.choice b { width: 26px; height: 54px; background: #e6e6e6; border-left: 2px solid #bbb; }

/* parts */
.workbench { flex: 1; display: flex; gap: 8px; min-height: 0; }
.part { display: flex; flex-direction: column; }
.model { width: 714px; border: solid #000; border-width: 2px 2px 0 0; border-top-right-radius: 10px; }
.right { width: 2148px; display: flex; flex-direction: column; gap: 8px; }
.editor { height: 1226px; border: solid #000; border-width: 2px 0 2px 2px; border-top-left-radius: 10px; }
.audit { height: 468px; border: solid #000; border-width: 2px 0 0 2px; border-top-left-radius: 10px; }
.tabs { height: 56px; flex: none; display: flex; }
.tab { display: flex; align-items: center; border: solid #000; border-width: 0 2px 2px 0; white-space: nowrap; }
.tab.active { border-bottom: 0; border-top-right-radius: 8px; }
.rest { flex: 1; border-bottom: 2px solid #000; display: flex; justify-content: flex-end; gap: 24px; padding: 10px 14px 0 0; }
.mm { width: 20px; height: 20px; }
.ic { width: 44px; height: 44px; }
.x { width: 23px; height: 23px; }
.t-model { width: 190px; padding-left: 5px; }
.t-model span { margin-left: 11px; width: 92px; }
.model .rest { padding-right: 18px; }
.t-view { width: 330px; padding-left: 8px; }
.t-view span { margin-left: 10px; width: 231px; }
.t-audit { width: 170px; padding-left: 10px; }
.t-audit .ic { width: 42px; }
.t-audit span { margin-left: 10px; width: 71px; }
.tab:not(.active) { padding-top: 2px; }
.t-outline { width: 148px; padding-left: 10px; }
.t-outline span { margin-left: 10px; }
.t-links { width: 236px; padding-left: 11px; }
.t-links span { margin-left: 9px; }
.t-diags { width: 205px; padding-left: 11px; }
.t-diags span { margin-left: 9px; }
.t-script { width: 135px; padding-left: 10px; }
.t-script span { margin-left: 9px; }
.toolbar { flex: none; display: flex; padding-top: 4px; height: 64px; }
.toolbar.left { padding-left: 58px; }
.toolbar .menu { width: 20px; height: 11px; margin: 12px 0 0 24px; }
.toolbar.edit { padding-left: 982px; overflow: hidden; width: 2138px; }
.toolbar.low { justify-content: flex-end; }

/* model tree */
.tree { flex: 1; list-style: none; margin: 0 4px 0 2px; padding: 0; border: 2px solid #c4c4c4; border-bottom: 0; }
.tree li { height: 50px; display: flex; align-items: center; border-bottom: 2px solid #fff; }
.tree li::before { content: ""; width: 0; height: 0; flex: none; border-style: solid; border-color: transparent; border-width: 9px; margin-right: 15px; }
.tree li svg { width: 44px; height: 44px; margin-right: 22px; }
.tree .l0 { padding-left: 15px; } .tree .l1 { padding-left: 47px; } .tree .l2 { padding-left: 79px; } .tree .l3 { padding-left: 111px; }
.tree .open::before { border-width: 15px 9px 0; border-top-color: #8a8a8a; }
.tree .shut::before { border-width: 9px 0 9px 15px; border-left-color: #8a8a8a; margin: 0 16px 0 2px; }
.tree .selected { background: #dcdcdc; border-color: #fff; background-clip: padding-box; }

/* palette */
.stage { height: 1102px; display: flex; }
.palette { width: 270px; flex: none; height: 1094px; padding-left: 5px; border-right: 2px solid #000; display: flex; flex-direction: column; }
.palette > * { width: 259px; flex: none; }
.fold { height: 28px; border-bottom: 2px solid #000; padding: 4px 0 0 7px; }
.fold svg { width: 13px; height: 22px; }
.picks { height: 73px; border-bottom: 2px solid #000; display: flex; align-items: center; gap: 34px; padding-left: 11px; }
.picks svg { width: 48px; height: 48px; }
.drawer { height: 44px; border-top: 2px solid #000; background: linear-gradient(#fff, #e9e9e9 25%, #777) 0 2px / 100% 39px no-repeat; display: flex; align-items: center; padding: 0 5px; font-size: 21.5px; }
.drawer.first { height: 42px; margin-top: 1px; padding-bottom: 4px; border-top-color: #a5a5a5; background: none; }
.drawer span { margin-left: 7px; flex: 1; }
.drawer .f { width: 30px; height: 22px; }
.drawer .p { width: 20px; height: 14px; }
.concepts { height: 821px; overflow: hidden; position: relative; padding-top: 2px; }
.shapes { margin: 0 11px 0 10px; border-bottom: 2px solid #000; padding-left: 1px; display: grid; grid-template-columns: repeat(3, 48px); column-gap: 34px; grid-auto-rows: 62px; align-items: center; stroke: #000; stroke-width: 2; }
.shapes svg { width: 48px; height: 48px; }
.other { height: 66px; }
.loc { fill: #fdba82; }
.grp { fill: #fff; }
.business { fill: #fefdb5; height: 318px; padding-top: 5px; }
.application { fill: #bce4ee; height: 194px; padding-top: 5px; }
.technology { fill: #b3ffb3; padding-top: 4px; grid-auto-rows: 62.400px; }
.scroller { position: absolute; left: 53px; bottom: 0; width: 160px; height: 14px; background: rgba(0,0,0,.78); }
.scroller svg { width: 16px; height: 10px; margin: 3px 0 0 69px; }

/* diagram */
.canvas { overflow: hidden; font-family: "Liberation Serif", serif; font-size: 7.600px; letter-spacing: 0; }
.canvas text { text-anchor: middle; }
.box { stroke: #a09f80; stroke-width: 1; }
.mini { fill: none; stroke: #555; stroke-width: 4; }
.assoc { stroke: #000; stroke-width: 1.700; fill: none; marker-start: url(#solid); marker-end: url(#solid); }
.access { stroke: #333; stroke-width: 1.300; fill: none; marker-end: url(#open); }
.symbolbar { width: 28px; flex: none; display: flex; flex-direction: column; }
.symbolbar svg { width: 14px; height: 24px; margin: 2px 0 2px 5px; }
.symbolbar div { flex: 1; background: #dcdcdc; padding: 10px 0 0 1px; }
.symbolbar span { writing-mode: vertical-rl; font-size: 18px; letter-spacing: .6px; line-height: 28px; }

/* audit table */
.table { margin-left: 4px; height: 280px; border: solid #c4c4c4; border-width: 1px 2px 2px 1px; display: flex; flex-direction: column; }
.row { display: grid; grid-template-columns: 290px 120px 800px 1fr; height: 50px; flex: none; }
.row > div { border-right: 1.500px solid #c8c8c8; display: flex; align-items: center; }
.row > div:last-child { border-right: 0; }
.row svg { width: 44px; height: 44px; margin: -1px 6px 0 41px; }
.row span { margin-top: -2px; }
.head { height: 33px; border-bottom: 1px solid #c9c9c9; }
.head > div { padding-left: 5px; height: 22px; margin-top: 4px; border-color: #ddd; line-height: 22px; }
.alt { background: #f4f5f5; }
.last { height: 44px; }
.status { flex: 1; display: flex; align-items: center; font-size: 20px; color: #222; padding-top: 3px; }
.status .dots { margin: -6px 0 0 961px; width: 962px; letter-spacing: 1px; }
.status .count { width: 167px; padding-left: 10px; }
.status svg { width: 44px; height: 44px; }
```
FILE: script.js
```js
// Node: id, label, left, top, layer, outline, corner symbol
const W = 59.5, H = 27;
const FILL = { b: '#fefdb5', a: '#b3ffff', l: '#fbb377' };
const nodes = [
  ['actor', 'Business Actor 016', 1984.5, 746, 'b', 'rect', 'actor'],
  ['role', 'Business Role 017', 1546, 248, 'b', 'rect', 'role'],
  ['collab', 'Business Collaboratio...', 1078.5, 866.5, 'b', 'rect', 'collab'],
  ['iface', 'Business Interfa...', 2001.5, 686.5, 'b', 'ball'],
  ['process', 'Business Process 020', 1060.5, 626.5, 'b', 'round', 'process'],
  ['function', 'Business Function 021', 1942, 230.5, 'b', 'round', 'function'],
  ['inter', 'Business Interaction ...', 1240, 392.5, 'b', 'round', 'inter'],
  ['service', 'Business Service 023', 1708.5, 212.5, 'b', 'round', 'service'],
  ['event', 'Business Event 024', 2092.5, 464.5, 'b', 'round', 'event'],
  ['object', 'Business Object 025', 1318.5, 350.5, 'b', 'data'],
  ['contract', 'Contract 026', 1438.5, 278.5, 'b', 'data'],
  ['repr', 'Representation 027', 1156, 464.5, 'b', 'wave'],
  ['product', 'Product 028', 994, 764.5, 'b', 'product', 'product'],
  ['acomp', 'Application Compon...', 2452.5, 854.5, 'a', 'rect', 'component'],
  ['acollab', 'Application ...', 1336.5, 1019, 'a', 'rect', 'collab'],
  ['aiface', 'Application ...', 1162, 962, 'a', 'ball'],
  ['afunction', 'Application Functio...', 2398.5, 896.5, 'a', 'round', 'function'],
  ['ainter', 'Application Interacti...', 1732.5, 1043.5, 'a', 'round', 'inter'],
  ['aprocess', 'Application Process ...', 2236.5, 812.5, 'a', 'round', 'process'],
  ['aservice', 'Application Service ...', 2302.5, 956.5, 'a', 'round', 'service'],
  ['aevent', 'Application Event 036', 2080.5, 1046, 'a', 'round', 'event'],
  ['adata', 'Data Object 037', 2176.5, 764.5, 'a', 'data'],
  ['location', 'Location 014', 2326.5, 584.5, 'l', 'rect', 'location'],
  ['grouping', 'Grouping 015', 2256.5, 680.5, '', 'group']
];

const box = {};
let out = '';
for (const [id, label, x, y, layer, kind, sym] of nodes) {
  const w = kind === 'group' ? 150 : W, h = kind === 'group' ? 20 : H, fill = FILL[layer];
  box[id] = { cx: x + w / 2, cy: y + h / 2, hw: w / 2 + 3.5, hh: h / 2 + 2 };
  const len = (label.length - (label.endsWith('...') ? 2 : 0)) * 2.62;
  const text = (tx, ty) => `<text x="${tx}" y="${ty}" textLength="${len}" lengthAdjust="spacingAndGlyphs">${label}</text>`;
  if (kind === 'ball') {
    const cx = x + 36, cy = y + h / 2;
    out += `<path class="box" d="M${cx - 26} ${cy}h13"/><circle class="box" cx="${cx}" cy="${cy}" r="13.2" fill="${fill}"/>` + text(cx - 36, y + 6.5);
  } else if (kind === 'group') {
    out += `<path d="M${x} ${y + 9}V${y}h37.500v9M${x} ${y + 9}h150v11h-150z" fill="#fff" stroke="#888" stroke-width="1" stroke-dasharray="2 1"/>` + text(x + 19, y + 7);
  } else if (kind === 'wave') {
    out += `<path class="box" fill="${fill}" d="M${x} ${y}h${w}v19q-14-6-28 3q-16 9-31.500 0z"/><path d="M${x} ${y + 4.5}h${w}" stroke="#cfcd92" stroke-width="2"/>` + text(x + w / 2, y + 12);
  } else {
    const r = kind === 'round' ? 6 : 0;
    out += `<rect class="box" x="${x}" y="${y}" width="${w}" height="${h}" rx="${r}" fill="${fill}"/>`;
    if (kind === 'data') out += `<path d="M${x} ${y + 4.5}h${w}" stroke="${layer === 'a' ? '#86cfcf' : '#cfcd92'}" stroke-width="2"/>`;
    if (kind === 'product') out += `<path class="box" fill="none" d="M${x} ${y + 4.5}h30v-4.500"/>`;
    if (sym) out += `<use href="#a-${sym}" class="mini" x="${x + w - 13}" y="${y + 2}" width="12" height="12"/>`;
    out += text(x + w / 2, y + (kind === 'data' ? 18.5 : 21.8));
  }
}
document.getElementById('nodes').innerHTML = out;

// Edges run centre to centre and stop at the outline of each node.
const clip = (a, b) => {
  const dx = b.cx - a.cx, dy = b.cy - a.cy;
  const t = Math.min(a.hw / Math.abs(dx || 1e-6), a.hh / Math.abs(dy || 1e-6));
  return `${(a.cx + dx * t).toFixed(1)} ${(a.cy + dy * t).toFixed(1)}`;
};
const passive = ['object', 'contract', 'repr', 'adata'];
const business = ['actor', 'role', 'collab', 'iface', 'process', 'function', 'inter', 'service', 'event', 'object', 'contract', 'repr', 'product'];
const pairs = [];
business.forEach((a, i) => business.slice(i + 1).forEach(b => pairs.push([a, b])));
for (const hub of ['acollab', 'aiface', 'ainter']) {
  for (const b of business) pairs.push([hub, b]);
  for (const b of ['acomp', 'afunction', 'aprocess', 'aservice', 'aevent', 'adata']) pairs.push([hub, b]);
}
pairs.push(['acollab', 'aiface'], ['acollab', 'ainter'], ['aiface', 'ainter'],
  ['aevent', 'process'], ['aevent', 'collab'], ['aevent', 'product'],
  ['aevent', 'aprocess'], ['aevent', 'afunction'], ['aevent', 'acomp'], ['aevent', 'aservice'],
  ['aservice', 'afunction'], ['aservice', 'acomp'], ['afunction', 'acomp'],
  ['aprocess', 'adata'], ['afunction', 'adata'], ['aservice', 'adata'], ['aevent', 'adata'], ['acomp', 'adata'],
  ['location', 'grouping'], ['grouping', 'afunction'], ['grouping', 'acomp']);

let lines = '';
for (let [a, b] of pairs) {
  const light = passive.includes(a) || passive.includes(b);
  if (passive.includes(a)) [a, b] = [b, a];
  lines += `<path class="${light ? 'access' : 'assoc'}" d="M${clip(box[a], box[b])}L${clip(box[b], box[a])}"/>`;
}
document.getElementById('edges').innerHTML = lines;
```
